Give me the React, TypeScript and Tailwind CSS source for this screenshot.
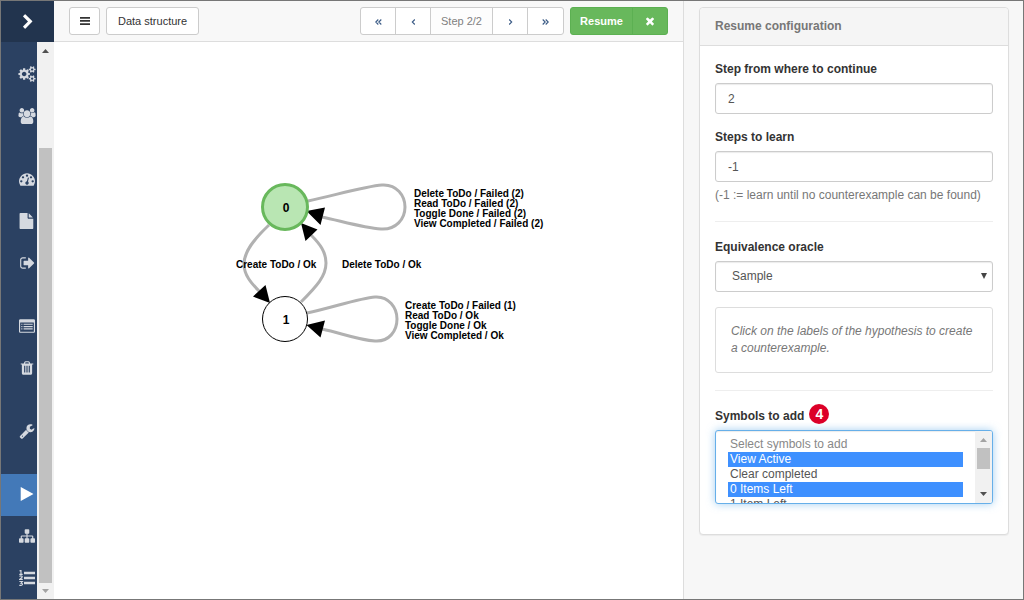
import type { ReactNode } from 'react';

type IconProps = { d: string; viewBox?: string; className?: string };

function Icon({ d, viewBox = '0 0 1792 1792', className = '' }: IconProps) {
  return (
    <svg viewBox={viewBox} fill="currentColor" aria-hidden="true" className={className}>
      <path d={d} />
    </svg>
  );
}

const paths = {
  chevron:
    'M1363 877l-742 742q-19 19-45 19t-45-19l-166-166q-19-19-19-45t19-45l531-531-531-531q-19-19-19-45t19-45l166-166q19-19 45-19t45 19l742 742q19 19 19 45t-19 45z',
  cogs: 'M896 896q0-106-75-181t-181-75-181 75-75 181 75 181 181 75 181-75 75-181zm768 512q0-52-38-90t-90-38-90 38-38 90q0 53 37.5 90.5t90.5 37.5 90.5-37.5 37.5-90.5zm0-1024q0-52-38-90t-90-38-90 38-38 90q0 53 37.5 90.5t90.5 37.5 90.5-37.5 37.5-90.5zm-384 421v185q0 10-7 19.5t-16 10.5l-155 24q-11 35-32 76 34 48 90 115 7 11 7 20 0 12-7 19-23 30-82.5 89.5t-78.5 59.5q-11 0-21-7l-115-90q-37 19-77 31-11 108-23 155-7 24-30 24h-186q-11 0-20-7.5t-10-17.5l-23-153q-34-10-75-31l-118 89q-7 7-20 7-11 0-21-8-144-133-144-160 0-9 7-19 10-14 41-53t47-61q-23-44-35-82l-152-24q-10-1-17-9.5t-7-19.5v-185q0-10 7-19.5t16-10.5l155-24q11-35 32-76-34-48-90-115-7-11-7-20 0-12 7-20 22-30 82-89t79-59q11 0 21 7l115 90q34-18 77-32 11-108 23-154 7-24 30-24h186q11 0 20 7.5t10 17.5l23 153q34 10 75 31l118-89q8-7 20-7 11 0 21 8 144 133 144 160 0 8-7 19-12 16-42 54t-45 60q23 48 34 82l152 23q10 2 17 10.5t7 19.5zm640 533v140q0 16-149 31-12 27-30 52 51 113 51 138 0 4-4 7-122 71-124 71-8 0-46-47t-52-68q-20 2-30 2t-30-2q-14 21-52 68t-46 47q-2 0-124-71-4-3-4-7 0-25 51-138-18-25-30-52-149-15-149-31v-140q0-16 149-31 13-29 30-52-51-113-51-138 0-4 4-7 4-2 35-20t59-34 30-16q8 0 46 46.5t52 67.5q20-2 30-2t30 2q51-71 92-112l6-2q4 0 124 70 4 3 4 7 0 25-51 138 17 23 30 52 149 15 149 31zm0-1024v140q0 16-149 31-12 27-30 52 51 113 51 138 0 4-4 7-122 71-124 71-8 0-46-47t-52-68q-20 2-30 2t-30-2q-14 21-52 68t-46 47q-2 0-124-71-4-3-4-7 0-25 51-138-18-25-30-52-149-15-149-31v-140q0-16 149-31 13-29 30-52-51-113-51-138 0-4 4-7 4-2 35-20t59-34 30-16q8 0 46 46.5t52 67.5q20-2 30-2t30 2q51-71 92-112l6-2q4 0 124 70 4 3 4 7 0 25-51 138 17 23 30 52 149 15 149 31z',
  users:
    'M593 896q-162 5-265 128h-134q-82 0-138-40.5t-56-118.5q0-353 124-353 6 0 43.5 21t97.5 42.5 119 21.5q67 0 133-23-5 37-5 66 0 159 93 287zm1071 637q0 120-73 189.5t-194 69.5h-874q-121 0-194-69.5t-73-189.5q0-53 3.5-103.5t14-109 26.5-108.5 43-97.5 62-81 85.5-53.5 111.5-20q10 0 43 21.5t73 48 107 48 135 21.5 135-21.5 107-48 73-48 43-21.5q61 0 111.5 20t85.5 53.5 62 81 43 97.5 26.5 108.5 14 109 3.5 103.5zm-1024-1277q0 106-75 181t-181 75-181-75-75-181 75-181 181-75 181 75 75 181zm704 384q0 159-112.5 271.5t-271.5 112.5-271.5-112.5-112.5-271.5 112.5-271.5 271.5-112.5 271.5 112.5 112.5 271.5zm576 225q0 78-56 118.5t-138 40.5h-134q-103-123-265-128 93-128 93-287 0-29-5-66 66 23 133 23 59 0 119-21.5t97.5-42.5 43.5-21q124 0 124 353zm-128-609q0 106-75 181t-181 75-181-75-75-181 75-181 181-75 181 75 75 181z',
  gauge:
    'M384 1152q0-53-37.5-90.5t-90.5-37.5-90.5 37.5-37.5 90.5 37.5 90.5 90.5 37.5 90.5-37.5 37.5-90.5zm192-448q0-53-37.5-90.5t-90.5-37.5-90.5 37.5-37.5 90.5 37.5 90.5 90.5 37.5 90.5-37.5 37.5-90.5zm428 481l101-382q6-26-7.5-48.5t-38.5-29.5-48 6.5-30 39.5l-101 382q-60 5-107 43.5t-63 98.5q-20 77 20 146t117 89 146-20 89-117q16-60-6-117t-72-91zm660-33q0-53-37.5-90.5t-90.5-37.5-90.5 37.5-37.5 90.5 37.5 90.5 90.5 37.5 90.5-37.5 37.5-90.5zm-640-640q0-53-37.5-90.5t-90.5-37.5-90.5 37.5-37.5 90.5 37.5 90.5 90.5 37.5 90.5-37.5 37.5-90.5zm448 192q0-53-37.5-90.5t-90.5-37.5-90.5 37.5-37.5 90.5 37.5 90.5 90.5 37.5 90.5-37.5 37.5-90.5zm320 448q0 261-141 483-19 29-54 29h-1402q-35 0-54-29-141-221-141-483 0-182 71-348t191-286 286-191 348-71 348 71 286 191 191 286 71 348z',
  file: 'M1152 512v-472q22 14 36 28l408 408q14 14 28 36h-472zm-128 32q0 40 28 68t68 28h544v1056q0 40-28 68t-68 28h-1344q-40 0-68-28t-28-68v-1600q0-40 28-68t68-28h800v544z',
  signOut:
    'M704 1440q0 4 1 20t.5 26.5-3 23.5-10 19.5-20.5 6.5h-320q-119 0-203.5-84.5t-84.5-203.5v-704q0-119 84.5-203.5t203.5-84.5h320q13 0 22.5 9.5t9.5 22.5q0 4 1 20t.5 26.5-3 23.5-10 19.5-20.5 6.5h-320q-66 0-113 47t-47 113v704q0 66 47 113t113 47h312l11.5 1 11.5 3 8 5.5 7 9 2 13.5zm928-544q0 26-19 45l-544 544q-19 19-45 19t-45-19-19-45v-288h-448q-26 0-45-19t-19-45v-384q0-26 19-45t45-19h448v-288q0-26 19-45t45-19 45 19l544 544q19 19 19 45z',
  listAlt:
    'M160 128h1472q66 0 113 47t47 113v1216q0 66-47 113t-113 47h-1472q-66 0-113-47t-47-113v-1216q0-66 47-113t113-47zM128 544v960q0 32 32 32h1472q32 0 32-32v-960q0-32-32-32h-1472q-32 0-32 32zM256 640h128v128h-128zM512 640h1024v128h-1024zM256 896h128v128h-128zM512 896h1024v128h-1024zM256 1152h128v128h-128zM512 1152h1024v128h-1024z',
  trash:
    'M704 1376v-704q0-14-9-23t-23-9h-64q-14 0-23 9t-9 23v704q0 14 9 23t23 9h64q14 0 23-9t9-23zm256 0v-704q0-14-9-23t-23-9h-64q-14 0-23 9t-9 23v704q0 14 9 23t23 9h64q14 0 23-9t9-23zm256 0v-704q0-14-9-23t-23-9h-64q-14 0-23 9t-9 23v704q0 14 9 23t23 9h64q14 0 23-9t9-23zm-544-992h448l-48-117q-7-9-17-11h-317q-10 2-17 11zm928 32v64q0 14-9 23t-23 9h-96v948q0 83-47 143.5t-113 60.5h-832q-66 0-113-58.5t-47-141.5v-952h-96q-14 0-23-9t-9-23v-64q0-14 9-23t23-9h309l70-167q15-37 54-63t79-26h320q40 0 79 26t54 63l70 167h309q14 0 23 9t9 23z',
  wrench:
    'M448 1472q0-26-19-45t-45-19-45 19-19 45 19 45 45 19 45-19 19-45zm644-420l-682 682q-37 37-90 37-52 0-91-37l-106-108q-38-36-38-90 0-53 38-91l681-681q39 98 114.5 173.5t173.5 114.5zm634-435q0 39-23 106-47 134-164.5 217.5t-258.5 83.5q-185 0-316.5-131.5t-131.5-316.5 131.5-316.5 316.5-131.5q58 0 121.5 16.5t107.5 46.5q16 11 16 28t-16 28l-293 169v224l193 107q5-3 79-48.5t135.5-81 70.5-35.5q15 0 23.5 10t8.5 25z',
  play: 'M1576 927l-1328 738q-23 13-39.5 3t-16.5-36v-1472q0-26 16.5-36t39.5 3l1328 738q23 13 23 31t-23 31z',
  sitemap:
    'M1792 1248v320q0 40-28 68t-68 28h-320q-40 0-68-28t-28-68v-320q0-40 28-68t68-28h96v-192h-512v192h96q40 0 68 28t28 68v320q0 40-28 68t-68 28h-320q-40 0-68-28t-28-68v-320q0-40 28-68t68-28h96v-192h-512v192h96q40 0 68 28t28 68v320q0 40-28 68t-68 28h-320q-40 0-68-28t-28-68v-320q0-40 28-68t68-28h96v-192q0-52 38-90t90-38h512v-192h-96q-40 0-68-28t-28-68v-320q0-40 28-68t68-28h320q40 0 68 28t28 68v320q0 40-28 68t-68 28h-96v192h512q52 0 90 38t38 90v192h96q40 0 68 28t28 68z',
  times:
    'M1490 1322q0 40-28 68l-136 136q-28 28-68 28t-68-28l-294-294-294 294q-28 28-68 28t-68-28l-136-136q-28-28-28-68t28-68l294-294-294-294q-28-28-28-68t28-68l136-136q28-28 68-28t68 28l294 294 294-294q28-28 68-28t68 28l136 136q28 28 28 68t-28 68l-294 294 294 294q28 28 28 68z',
};

const icon = 'h-4 w-4';
const wideIcon = 'h-4 w-[18px] shrink-0';

function ListOl() {
  return (
    <svg viewBox="0 0 16 16" aria-hidden="true" className="h-4 w-4">
      <path fill="currentColor" d="M5 1.700h11v2.600H5zM5 6.700h11v2.600H5zM5 11.700h11v2.600H5z" />
      <path
        fill="none"
        stroke="currentColor"
        strokeWidth="1.1"
        d="M.5 1L2 .4V4.300M.3 4.400h3.400M.4 6.400q1.500-1 2.600-.2T.5 9.400h3.300M.4 11.500h3l-1.400 1.600q1.500 0 1.500 1.200T.3 15.400"
      />
    </svg>
  );
}

const navGroups: { label: string; active?: boolean; icon: ReactNode }[][] = [
  [
    { label: 'Settings', icon: <Icon d={paths.cogs} viewBox="0 0 1920 1792" className={wideIcon} /> },
    { label: 'Users', icon: <Icon d={paths.users} viewBox="0 0 1920 1792" className={wideIcon} /> },
  ],
  [
    { label: 'Dashboard', icon: <Icon d={paths.gauge} className={icon} /> },
    { label: 'Files', icon: <Icon d={paths.file} viewBox="64 0 1792 1792" className={icon} /> },
    { label: 'Exit project', icon: <Icon d={paths.signOut} viewBox="0 0 1664 1792" className={icon} /> },
  ],
  [
    { label: 'Symbols', icon: <Icon d={paths.listAlt} className={icon} /> },
    { label: 'Trash', icon: <Icon d={paths.trash} className={icon} /> },
  ],
  [{ label: 'Tools', icon: <Icon d={paths.wrench} className={icon} /> }],
  [
    { label: 'Learn', active: true, icon: <Icon d={paths.play} className={icon} /> },
    { label: 'Results', icon: <Icon d={paths.sitemap} className={icon} /> },
    { label: 'Counters', icon: <ListOl /> },
  ],
];

function Arrow({ down = false, className = '' }: { down?: boolean; className?: string }) {
  return (
    <svg viewBox="0 0 7 4" aria-hidden="true" fill="currentColor" className={`h-1 w-[7px] ${className}`}>
      <path d={down ? 'M0 0h7L3.5 4z' : 'M0 4h7L3.5 0z'} />
    </svg>
  );
}

function Sidebar() {
  return (
    <aside className="flex w-[53px] shrink-0 flex-col bg-[#2b4162]">
      <button type="button" aria-label="Expand menu" className="flex h-[41px] shrink-0 items-center justify-center bg-[#22344e] text-white">
        <Icon d={paths.chevron} className="h-4 w-4" />
      </button>
      <div className="flex min-h-0 flex-1">
        <nav className="flex min-w-0 flex-1 flex-col gap-[21px] overflow-hidden pt-3 text-[#d5d9e0]">
          {navGroups.map((group, i) => (
            <div key={i} className="flex flex-col">
              {group.map((item) => (
                <a
                  key={item.label}
                  href="#"
                  aria-label={item.label}
                  className={`flex h-[42px] items-center pb-0.5 pl-4 ${item.active ? 'bg-[#4379b8] text-white' : ''}`}
                >
                  <span className="flex w-5 shrink-0 justify-center">{item.icon}</span>
                </a>
              ))}
            </div>
          ))}
        </nav>
        <div className="flex w-[17px] shrink-0 flex-col items-center bg-[#f1f1f1]">
          <Arrow className="my-[7px] text-[#505050]" />
          <div className="mt-[88px] w-[13px] flex-1 bg-[#c1c1c1]" />
          <Arrow down className="my-[6px] text-[#a3a3a3]" />
        </div>
      </div>
    </aside>
  );
}

function Angle({ d }: { d: string }) {
  return (
    <svg viewBox="0 0 7 6" fill="none" stroke="currentColor" strokeWidth="1.1" aria-hidden="true" className="h-[6px] w-[7px]">
      <path d={d} />
    </svg>
  );
}

function Toolbar() {
  const step = 'flex w-[35px] items-center justify-center border-r border-[#ccc] pt-px text-[#3a5a85]';
  return (
    <header className="flex h-[41px] shrink-0 items-center gap-[6px] border-b border-[#ddd] bg-[#f8f8f8] px-[15px] text-[11px]">
      <button type="button" aria-label="Menu" className="flex h-7 w-[31px] items-center justify-center rounded-[3px] border border-[#ccc] bg-white">
        <svg viewBox="0 0 10 8" fill="currentColor" aria-hidden="true" className="h-2 w-[10px]">
          <path d="M0 0h10v1.700H0zM0 3.100h10v1.700H0zM0 6.200h10v1.700H0z" />
        </svg>
      </button>
      <button type="button" className="h-7 rounded-[3px] border border-[#ccc] bg-white px-[11px]">
        Data structure
      </button>
      <div className="ml-auto flex h-7 overflow-hidden rounded-[3px] border border-[#ccc] bg-white">
        <button type="button" aria-label="First step" className={step}>
          <Angle d="M3.300.5L.8 3l2.500 2.500M6.300.5L3.800 3l2.500 2.500" />
        </button>
        <button type="button" aria-label="Previous step" className={step}>
          <Angle d="M4.800.5L2.300 3l2.500 2.500" />
        </button>
        <span className="flex items-center border-r border-[#ccc] bg-[#fdfdfd] px-[10px] text-[#808080]">Step 2/2</span>
        <button type="button" aria-label="Next step" className={step}>
          <Angle d="M2.200.5L4.700 3 2.200 5.500" />
        </button>
        <button type="button" aria-label="Last step" className="flex w-[35px] items-center justify-center pt-px text-[#3a5a85]">
          <Angle d="M.7.5L3.200 3 .7 5.500M3.700.5L6.200 3 3.700 5.500" />
        </button>
      </div>
      <div className="flex h-7 overflow-hidden rounded-[3px] border border-[#5cb052] bg-[#68b85c] text-white">
        <button type="button" className="w-[62px] border-r border-[#5cb052] font-bold">
          Resume
        </button>
        <button type="button" aria-label="Abort" className="flex w-[34px] items-center justify-center">
          <Icon d={paths.times} className="h-3 w-3" />
        </button>
      </div>
    </header>
  );
}

function Lines({ x, y, lines }: { x: number; y: number; lines: string[] }) {
  return (
    <text x={x} y={y}>
      {lines.map((line, i) => (
        <tspan key={line} x={x} dy={i === 0 ? 0 : 10}>
          {line}
        </tspan>
      ))}
    </text>
  );
}

function Hypothesis() {
  return (
    <svg role="img" aria-label="Hypothesis" className="min-h-0 w-full flex-1 bg-white text-[10px] font-bold">
      <g transform="translate(-54 -42)" fill="#000">
        <g fill="none" stroke="#b1b1b1" strokeWidth="3">
          <path d="M308 201C332 196 366 186 382 185C397 184 405 196 405 207C405 219 396 230 381 229C364 228 341 221 322 217" />
          <path d="M307 313C331 308 360 298 375 297C389 296 397 308 397 319C397 331 389 342 375 341C358 340 341 333 322 329" />
          <path d="M269 225C253 240 244 252 244 264C244 275 251 283 260 292" />
          <path d="M301 302C317 286 326 276 326 263C326 252 320 244 311 235" />
        </g>
        <path d="M306.500 211L325 207.500L320.500 225zM306.500 325L325 320.500L320.500 337.500zM270 303L253 296.500L265.500 285zM301 223L317.500 229.500L305.500 241z" />
        <circle cx="285" cy="207" r="22.500" fill="#b9e6b3" stroke="#68b85c" strokeWidth="3" />
        <circle cx="285" cy="319" r="22.500" fill="#fff" stroke="#000" />
        <g textAnchor="middle" className="text-[12px]">
          <text x="286" y="212">0</text>
          <text x="286" y="324">1</text>
        </g>
        <Lines
          x={414}
          y={197}
          lines={['Delete ToDo / Failed (2)', 'Read ToDo / Failed (2)', 'Toggle Done / Failed (2)', 'View Completed / Failed (2)']}
        />
        <Lines x={236} y={268} lines={['Create ToDo / Ok']} />
        <Lines x={342} y={268} lines={['Delete ToDo / Ok']} />
        <Lines x={405} y={309} lines={['Create ToDo / Failed (1)', 'Read ToDo / Ok', 'Toggle Done / Ok', 'View Completed / Ok']} />
      </g>
    </svg>
  );
}

const control = 'block w-full h-[31px] rounded-[3px] border border-[#ccc] bg-white text-[#555] shadow-[inset_0_1px_1px_rgba(0,0,0,0.08)]';
const label = 'mb-[5px] block font-bold';
const option =
  'h-[15px] min-h-0 px-[2px] py-0 leading-[15px] checked:bg-linear-to-r checked:from-[#3e90ff] checked:to-[#3e90ff] checked:[-webkit-text-fill-color:#fff]';

function ResumePanel() {
  return (
    <aside className="w-[340px] shrink-0 border-l border-[#ddd] bg-[#f7f7f7] pt-[6px] pr-[14px] pl-[15px]">
      <section className="rounded border border-[#ddd] bg-white shadow-[0_1px_1px_rgba(0,0,0,0.05)]">
        <h2 className="rounded-t border-b border-[#ddd] bg-[#f5f5f5] px-[15px] py-[10px] font-bold text-[#777]">
          Resume configuration
        </h2>
        <form className="p-[15px]">
          <label htmlFor="step" className={label}>Step from where to continue</label>
          <input id="step" defaultValue="2" className={`${control} mb-[15px] px-3`} />
          <label htmlFor="learn" className={label}>Steps to learn</label>
          <input id="learn" defaultValue="-1" className={`${control} px-3`} />
          <p className="mt-[5px] text-[#777]">(-1 := learn until no counterexample can be found)</p>
          <hr className="my-[17px] border-[#eee]" />
          <label htmlFor="oracle" className={label}>Equivalence oracle</label>
          <div className="relative mb-[15px]">
            <select id="oracle" className={`${control} appearance-none px-4`}>
              <option>Sample</option>
            </select>
            <svg viewBox="0 0 6 6" fill="#444" aria-hidden="true" className="pointer-events-none absolute top-3 right-[6px] h-[6px] w-[6px]">
              <path d="M0 0h6L3 6z" />
            </svg>
          </div>
          <p className="rounded-[3px] border border-[#ddd] p-[15px] text-[#777] italic">
            Click on the labels of the hypothesis to create a counterexample.
          </p>
          <hr className="my-[17px] border-[#eee]" />
          <div className="mb-[5px] flex h-[17px] items-center gap-[5px]">
            <label htmlFor="symbols" className="font-bold">Symbols to add</label>
            <span className="mb-[5px] flex h-5 w-5 items-center justify-center rounded-full bg-[#dc0028] text-sm font-bold text-white">4</span>
          </div>
          <div className="mb-[15px] flex h-[74px] overflow-hidden rounded-[3px] border border-[#66afe9] bg-white shadow-[inset_0_1px_1px_rgba(0,0,0,0.08),0_0_8px_rgba(102,175,233,0.6)]">
            <select
              id="symbols"
              multiple
              defaultValue={['View Active', '0 Items Left']}
              className="h-full min-w-0 flex-1 px-3 py-[6px] text-[#555] outline-none [scrollbar-width:none]"
            >
              <option disabled className={`${option} text-[#888]`}>Select symbols to add</option>
              <option className={option}>View Active</option>
              <option className={option}>Clear completed</option>
              <option className={option}>0 Items Left</option>
              <option className={option}>1 Item Left</option>
            </select>
            <div className="flex w-[17px] shrink-0 flex-col items-center bg-[#f1f1f1]">
              <Arrow className="mt-[7px] mb-[6px] text-[#a3a3a3]" />
              <div className="h-[21px] w-[13px] bg-[#c1c1c1]" />
              <Arrow down className="mt-auto mb-[7px] text-[#505050]" />
            </div>
          </div>
        </form>
      </section>
    </aside>
  );
}

export default function App() {
  return (
    <div className="flex h-screen border border-[#777] font-['Liberation_Sans',Arial,sans-serif] text-[12px] leading-[17px] text-[#333]">
      <Sidebar />
      <main className="flex min-w-0 flex-1 flex-col">
        <Toolbar />
        <Hypothesis />
      </main>
      <ResumePanel />
    </div>
  );
}
